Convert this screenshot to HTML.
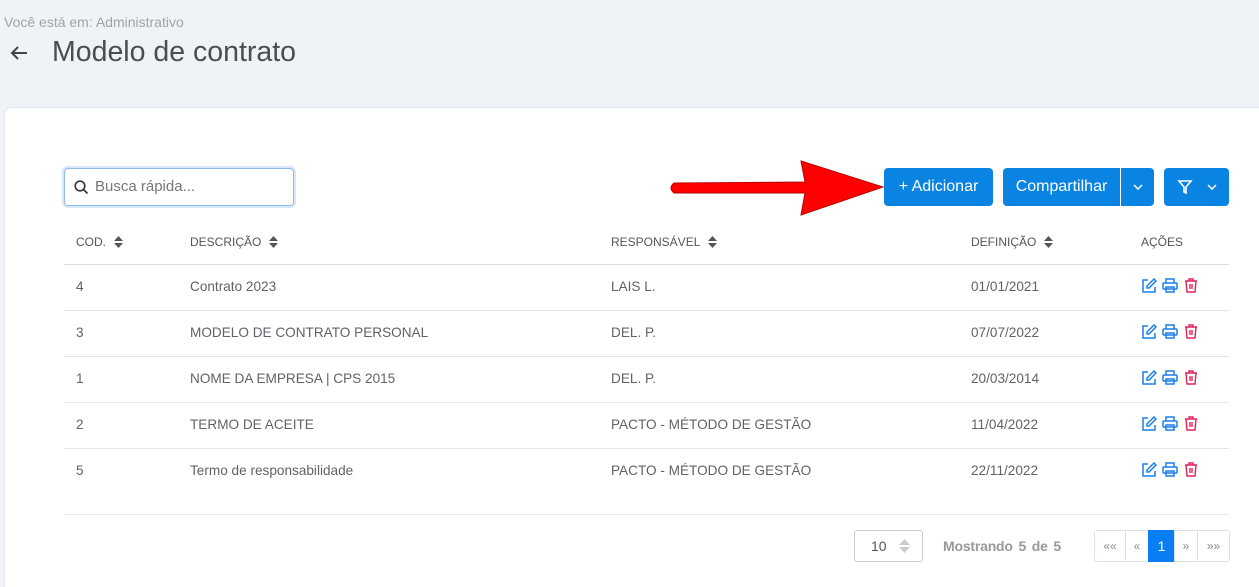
<!DOCTYPE html><html style="overflow:hidden"><head><style>
html,body{margin:0;width:1259px;height:587px;overflow:hidden}
body{background:#eff2f7;font-family:"Liberation Sans",sans-serif;position:relative;color:#51555a}
.a{position:absolute}
.card{left:4px;top:107px;width:1270px;height:500px;background:#fff;border-radius:8px;border:1px solid #e3e6ec}
.btn{background:#0a84e3;color:#fff;border-radius:4px;font-size:16px;height:38px;top:168px;display:flex;align-items:center;justify-content:center}
.h{font-size:12px;color:#51555a;top:235px;display:flex;align-items:center}
.h svg{margin-left:8px}
.c{font-size:13.6px;color:#5f6368}
.ln{left:64px;width:1165px;height:1px;background:#e2e5ea}
.pg{top:530px;height:30px;border:1px solid #dde1e6;font-size:12px;color:#888;display:flex;align-items:center;justify-content:center}
</style></head><body>
<div class="a" style="left:4px;top:14px;font-size:14px;color:#a0a4a9">Você está em: Administrativo</div>
<svg class="a" style="left:10px;top:45px" width="18" height="16" viewBox="0 0 18 16"><path d="M17 8H2M8 2L2 8l6 6" stroke="#444" stroke-width="2" fill="none"/></svg>
<div class="a" style="left:52px;top:36px;font-size:28.5px;color:#4a4d52">Modelo de contrato</div>
<div class="a card"></div>
<div class="a" style="left:64px;top:168px;width:228px;height:36px;border:1px solid #8fbcea;border-radius:4px;box-shadow:0 0 0 2px #d6e8fa"></div>
<svg class="a" style="left:74px;top:180px" width="15" height="15" viewBox="0 0 15 15"><circle cx="6" cy="6" r="4.8" stroke="#333" stroke-width="1.6" fill="none"/><path d="M9.5 9.5L13.5 13.5" stroke="#333" stroke-width="1.6"/></svg>
<div class="a" style="left:95px;top:178px;font-size:15px;color:#777">Busca rápida...</div>
<svg class="a" style="left:665px;top:158px" width="220" height="60" viewBox="0 0 220 60"><path d="M9 25L140 24L136 3L218 29L136 57L140 35L9 35Q3 30 9 25Z" fill="#f00" stroke="#b00" stroke-width="1"/></svg>
<div class="a btn" style="left:884px;width:109px">+ Adicionar</div>
<div class="a btn" style="left:1003px;width:151px"><span style="width:117px;text-align:center;border-right:1px solid #fff;line-height:38px">Compartilhar</span><span style="flex:1;display:flex;justify-content:center"><svg width="10" height="6" viewBox="0 0 10 6"><path d="M1 1l4 4 4-4" stroke="#fff" stroke-width="1.5" fill="none"/></svg></span></div>
<div class="a btn" style="left:1164px;width:65px"><svg width="16" height="16" viewBox="0 0 16 16"><path d="M2 2h12l-5 6v6l-2-1V8z" stroke="#fff" stroke-width="1.6" fill="none"/></svg><svg style="margin-left:14px" width="10" height="6" viewBox="0 0 10 6"><path d="M1 1l4 4 4-4" stroke="#fff" stroke-width="1.5" fill="none"/></svg></div>
<div class="a h" style="left:76px">COD.<svg width="9" height="12" viewBox="0 0 9 12"><path d="M0 5L4.5 0 9 5zM0 7l4.5 5L9 7z" fill="#555"/></svg></div>
<div class="a h" style="left:190px">DESCRIÇÃO<svg width="9" height="12" viewBox="0 0 9 12"><path d="M0 5L4.5 0 9 5zM0 7l4.5 5L9 7z" fill="#555"/></svg></div>
<div class="a h" style="left:611px">RESPONSÁVEL<svg width="9" height="12" viewBox="0 0 9 12"><path d="M0 5L4.5 0 9 5zM0 7l4.5 5L9 7z" fill="#555"/></svg></div>
<div class="a h" style="left:971px">DEFINIÇÃO<svg width="9" height="12" viewBox="0 0 9 12"><path d="M0 5L4.5 0 9 5zM0 7l4.5 5L9 7z" fill="#555"/></svg></div>
<div class="a h" style="left:1141px">AÇÕES</div>
<div class="a ln" style="top:264px;background:#d8dce2"></div>
<div id="rows"></div>
<div class="a ln" style="top:514px"></div>
<div class="a" style="left:854px;top:530px;width:67px;height:30px;border:1px solid #ccc;border-radius:3px;font-size:14px;color:#555;display:flex;align-items:center"><span style="margin-left:16px">10</span><svg style="margin-left:12px" width="11" height="16" viewBox="0 0 11 16"><path d="M0 7L5.5 1 11 7zM0 9l5.5 6L11 9z" fill="#ccc"/></svg></div>
<div class="a" style="left:943px;top:538px;font-size:14px;font-weight:bold;color:#999;word-spacing:2px;letter-spacing:-0.2px">Mostrando 5 de 5</div>
<div class="a pg" style="left:1094px;width:30px;border-radius:3px 0 0 3px">««</div>
<div class="a pg" style="left:1125px;width:22px">«</div>
<div class="a pg" style="left:1148px;width:25px;background:#0a7ff5;border-color:#0a7ff5;color:#fff;font-size:14px">1</div>
<div class="a pg" style="left:1174px;width:22px">»</div>
<div class="a pg" style="left:1197px;width:31px;border-radius:0 3px 3px 0">»»</div>
<script>
var d=[["4","Contrato 2023","LAIS L.","01/01/2021"],["3","MODELO DE CONTRATO PERSONAL","DEL. P.","07/07/2022"],["1","NOME DA EMPRESA | CPS 2015","DEL. P.","20/03/2014"],["2","TERMO DE ACEITE","PACTO - MÉTODO DE GESTÃO","11/04/2022"],["5","Termo de responsabilidade","PACTO - MÉTODO DE GESTÃO","22/11/2022"]];
var h="";d.forEach(function(r,i){var y=279+46*i;
h+='<div class="a c" style="left:76px;top:'+y+'px">'+r[0]+'</div><div class="a c" style="left:190px;top:'+y+'px">'+r[1]+'</div><div class="a c" style="left:611px;top:'+y+'px">'+r[2]+'</div><div class="a c" style="left:971px;top:'+y+'px">'+r[3]+'</div>';
h+='<svg class="a" style="left:1141px;top:'+(y-1)+'px" width="60" height="16" viewBox="0 0 60 16"><path d="M7 2H2v12h12V9" stroke="#1a7fe8" stroke-width="1.5" fill="none"/><path d="M13 1l2 2-7 7H6V8z" stroke="#1a7fe8" stroke-width="1.5" fill="none"/><g stroke="#1a7fe8" stroke-width="1.5" fill="none"><path d="M25 5V1h8v4"/><rect x="22" y="5" width="14" height="6" rx="1"/><rect x="25" y="9" width="8" height="5"/></g><g stroke="#e0245e" stroke-width="1.4" fill="none"><path d="M44 3h12M48 3V1h4v2"/><path d="M45 3l1 11h8l1-11"/><path d="M49 6v5M51 6v5"/></g></svg>';
if(i<4)h+='<div class="a ln" style="top:'+(y+31)+'px"></div>';});
document.getElementById("rows").innerHTML=h;
</script>
</body></html>
